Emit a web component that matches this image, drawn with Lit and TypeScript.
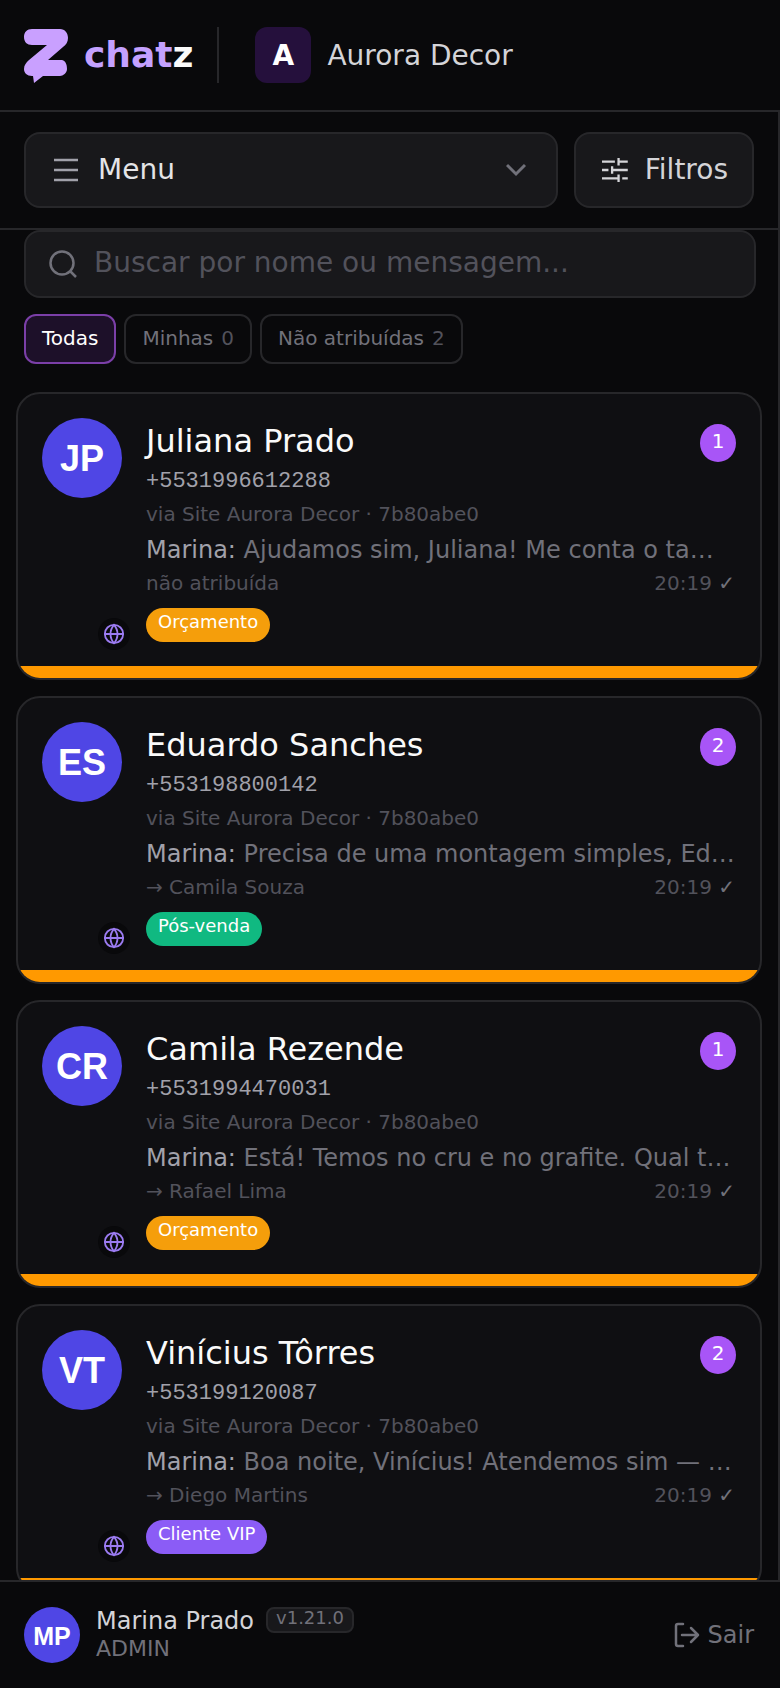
import { LitElement, html, css, svg } from "lit";
import { customElement } from "lit/decorators.js";

interface Conv {
  initials: string;
  name: string;
  phone: string;
  preview: string;
  assignee: string;
  tag: string;
  tagColor: string;
  unread: number;
}

const conversations: Conv[] = [
  { initials: "JP", name: "Juliana Prado", phone: "+5531996612288", preview: "Ajudamos sim, Juliana! Me conta o tamanho do seu ambiente", assignee: "não atribuída", tag: "Orçamento", tagColor: "#f59e0b", unread: 1 },
  { initials: "ES", name: "Eduardo Sanches", phone: "+553198800142", preview: "Precisa de uma montagem simples, Eduardo? Temos equipe", assignee: "→ Camila Souza", tag: "Pós-venda", tagColor: "#10b981", unread: 2 },
  { initials: "CR", name: "Camila Rezende", phone: "+5531994470031", preview: "Está! Temos no cru e no grafite. Qual tamanho você procura", assignee: "→ Rafael Lima", tag: "Orçamento", tagColor: "#f59e0b", unread: 1 },
  { initials: "VT", name: "Vinícius Tôrres", phone: "+553199120087", preview: "Boa noite, Vinícius! Atendemos sim — pode me contar mais", assignee: "→ Diego Martins", tag: "Cliente VIP", tagColor: "#8b5cf6", unread: 2 },
];

const globe = svg`<circle cx="12" cy="12" r="10"/><path d="M2 12h20"/><path d="M12 2a15 15 0 0 1 0 20a15 15 0 0 1 0-20z"/>`;

@customElement("app-root")
export class AppRoot extends LitElement {
  static styles = css`
    :host { display: block; width: 780px; height: 1688px; overflow: hidden; background: #09090b; color: #e4e4e7; font-family: "DejaVu Sans", sans-serif; }
    .app { height: 1688px; display: flex; flex-direction: column; }
    .top { height: 110px; flex: none; display: flex; align-items: center; padding: 0 24px; border-bottom: 2px solid #27272a; box-sizing: content-box; }
    .logo { display: flex; align-items: center; gap: 14px; }
    .logo svg { width: 46px; height: 56px; display: block; }
    .word { font-size: 36px; font-weight: 700; color: #c4a1ff; line-height: 1; }
    .word b { color: #fafafa; }
    .sep { width: 2px; height: 56px; background: #27272a; margin: 0 36px 0 24px; }
    .acct { width: 56px; height: 56px; border-radius: 12px; background: #25103c; color: #fff; font: 700 28px "DejaVu Sans", sans-serif; display: flex; align-items: center; justify-content: center; }
    .acct-name { margin-left: 16px; font-size: 28px; color: #d4d4d8; }
    .bar { height: 118px; flex: none; display: flex; gap: 16px; align-items: center; padding: 0 24px; border-bottom: 2px solid #27272a; border-right: 2px solid #27272a; box-sizing: border-box; }
    .btn { height: 76px; box-sizing: border-box; background: #18181b; border: 2px solid #27272a; border-radius: 16px; display: flex; align-items: center; font-size: 28px; color: #e4e4e7; }
    .btn span { padding-bottom: 2px; }
    .menu { flex: 1; padding: 0 30px 0 28px; gap: 20px; }
    .menu .lbl { flex: 1; }
    .filters { width: 180px; flex: none; padding: 0 24px 0 26px; gap: 17px; color: #d4d4d8; }
    .scroll { flex: 1; min-height: 0; overflow: hidden; border-right: 2px solid #27272a; padding: 0 16px 0 16px; position: relative; }
    .search { margin: 0 6px 0 8px; height: 68px; box-sizing: border-box; background: #18181b; border: 2px solid #27272a; border-radius: 16px; display: flex; align-items: center; padding: 0 22px; gap: 16px; font-size: 28px; color: #52525b; }
    .search span { padding-bottom: 4px; }
    .tabs { display: flex; gap: 8px; margin: 16px 0 0 8px; }
    .tab { height: 50px; box-sizing: border-box; border: 2px solid #27272a; border-radius: 12px; padding: 0 16px 2px; display: flex; gap: 8px; align-items: center; font-size: 20px; color: #71717a; }
    .tab span { color: #52525b; }
    .tab.on { background: #1d1029; color: #fff; border-color: #7b3fa8; }
    .list { margin: 28px 0 0 0; width: 746px; display: flex; flex-direction: column; gap: 16px; }
    .card { height: 288px; flex: none; box-sizing: border-box; background: #0f0f12; border: 2px solid #27272a; border-radius: 24px; overflow: hidden; display: flex; flex-direction: column; }
    .body { flex: 1; display: flex; min-height: 0; padding: 24px 24px 0 24px; gap: 24px; }
    .strip { height: 12px; flex: none; background: #ff9900; }
    .av-wrap { width: 80px; flex: none; position: relative; }
    .av { width: 80px; height: 80px; box-sizing: border-box; padding-top: 2px; border-radius: 50%; background: #4f46e5; color: #fff; display: flex; align-items: center; justify-content: center; font: 700 36px "Liberation Sans", sans-serif; }
    .chan { position: absolute; left: 56px; top: 200px; width: 32px; height: 32px; border-radius: 50%; background: #09090b; display: flex; align-items: center; justify-content: center; }
    .chan svg { width: 22px; height: 22px; fill: none; stroke: #9b7bf0; stroke-width: 2; }
    .info { flex: 1; min-width: 0; display: flex; flex-direction: column; }
    .row1 { display: flex; justify-content: space-between; height: 47px; }
    .name { font-size: 32px; line-height: 46px; color: #fafafa; }
    .badge { width: 36px; height: 38px; margin-top: 6px; border-radius: 50%; background: #a855f7; color: #fff; font-size: 20px; line-height: 34px; text-align: center; }
    .phone { font: 22px/28px "Liberation Mono", monospace; color: #a1a1aa; margin-top: 3px; }
    .via { font-size: 20px; line-height: 30px; color: #52525b; margin-top: 3px; }
    .prev { font-size: 24px; line-height: 36px; color: #71717a; margin-top: 3px; white-space: nowrap; overflow: hidden; text-overflow: ellipsis; }
    .prev b { font-weight: 400; color: #a1a1aa; }
    .row2 { display: flex; justify-content: space-between; font-size: 20px; line-height: 30px; color: #52525b; }
    .check { color: #71717a; margin-right: 1px; }
    .tag { align-self: flex-start; margin-top: 10px; height: 34px; border-radius: 17px; padding: 0 12px; color: #fff; font-size: 18px; line-height: 28px; }
    .foot { height: 108px; flex: none; box-sizing: border-box; border-top: 2px solid #27272a; display: flex; align-items: center; padding: 0 26px 0 24px; gap: 16px; }
    .foot .av { width: 56px; height: 56px; font-size: 25px; }
    .who { flex: 1; margin-bottom: 2px; }
    .who .l1 { display: flex; gap: 12px; align-items: flex-start; font-size: 24px; line-height: 30px; color: #d4d4d8; }
    .ver { font-size: 18px; line-height: 18px; height: 26px; margin-top: 1px; box-sizing: border-box; padding: 0 8px; background: #18181b; border: 2px solid #27272a; border-radius: 8px; color: #71717a; }
    .who .l2 { font-size: 22px; line-height: 26px; color: #71717a; }
    .out { display: flex; align-items: center; gap: 8px; font-size: 24px; color: #71717a; }
  `;

  render() {
    return html`<div class="app">
      <header class="top">
        <div class="logo">
          <svg viewBox="0 0 46 56"><path fill="#c9a0ff" d="M8 2H36C41 2 44 6 44 11C44 15 42 18 39 20L24 33H38C42 34 43 38 43 42C43 46 39 49 36 49H19L10 56L9 49H8C3 49 0 46 0 42C0 38 2 36 5 33L23 18H8C3 18 0 15 0 10C0 5 3 2 8 2Z"/></svg>
          <span class="word">chat<b>z</b></span>
        </div>
        <div class="sep"></div>
        <div class="acct">A</div>
        <div class="acct-name">Aurora Decor</div>
      </header>
      <div class="bar">
        <div class="btn menu">
          <svg width="24" height="24" viewBox="0 0 24 24" fill="none" stroke="#a1a1aa" stroke-width="2.500"><path d="M0 2H24M0 12H24M0 22H24"/></svg>
          <span class="lbl">Menu</span>
          <svg width="20" height="14" viewBox="0 0 20 14" fill="none" stroke="#71717a" stroke-width="3"><path d="M1 2L10 11L19 2"/></svg>
        </div>
        <div class="btn filters">
          <svg width="28" height="28" viewBox="0 0 28 28" fill="none" stroke="#d4d4d8" stroke-width="2.500"><path d="M0 5H14M18 5H28M18 1V9M0 14H7M11 14H28M11 10V18M0 23H18M22 23H28M18 19V27"/></svg>
          <span>Filtros</span>
        </div>
      </div>
      <main class="scroll">
        <div class="search">
          <svg width="30" height="30" viewBox="0 0 30 30" fill="none" stroke="#71717a" stroke-width="2.500"><circle cx="14" cy="14" r="11.500"/><path d="M22.500 22.500L28 28"/></svg>
          <span>Buscar por nome ou mensagem...</span>
        </div>
        <div class="tabs">
          <div class="tab on">Todas</div>
          <div class="tab">Minhas <span>0</span></div>
          <div class="tab">Não atribuídas <span>2</span></div>
        </div>
        <div class="list">
          ${conversations.map(
            (c) => html`<article class="card">
              <div class="body">
                <div class="av-wrap">
                  <div class="av">${c.initials}</div>
                  <div class="chan"><svg viewBox="0 0 24 24">${globe}</svg></div>
                </div>
                <div class="info">
                  <div class="row1"><div class="name">${c.name}</div><div class="badge">${c.unread}</div></div>
                  <div class="phone">${c.phone}</div>
                  <div class="via">via Site Aurora Decor · 7b80abe0</div>
                  <div class="prev"><b>Marina:</b> ${c.preview}</div>
                  <div class="row2"><span>${c.assignee}</span><span>20:19 <span class="check">✓</span></span></div>
                  <div class="tag" style="background:${c.tagColor}">${c.tag}</div>
                </div>
              </div>
              <div class="strip"></div>
            </article>`
          )}
        </div>
      </main>
      <footer class="foot">
        <div class="av">MP</div>
        <div class="who">
          <div class="l1">Marina Prado <span class="ver">v1.21.0</span></div>
          <div class="l2">ADMIN</div>
        </div>
        <div class="out">
          <svg width="26" height="26" viewBox="0 0 26 26" fill="none" stroke="#71717a" stroke-width="2.500" stroke-linecap="round" stroke-linejoin="round"><path d="M9 2H4Q2 2 2 4V22Q2 24 4 24H9M8 13H24M17 6L24 13L17 20"/></svg>
          <span>Sair</span>
        </div>
      </footer>
    </div>`;
  }
}
